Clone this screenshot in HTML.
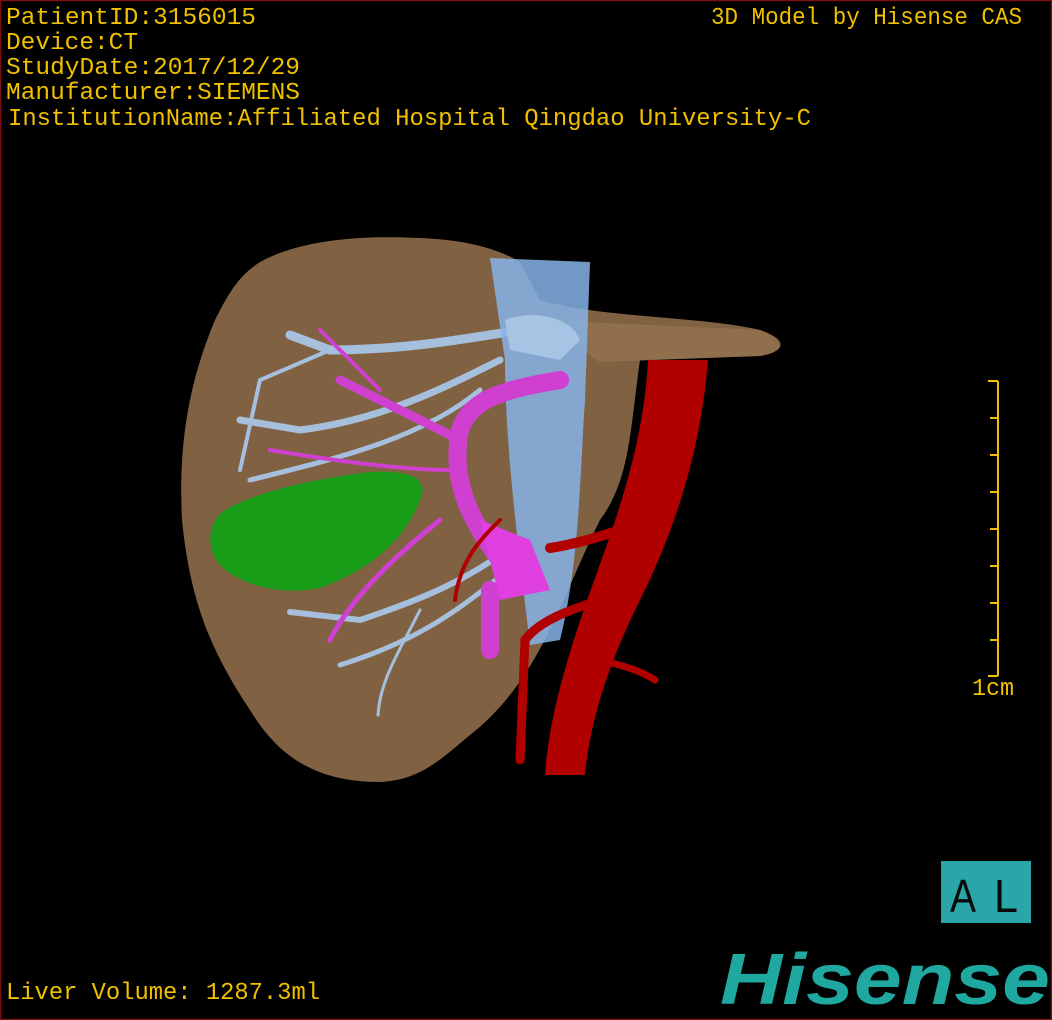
<!DOCTYPE html>
<html><head><meta charset="utf-8"><style>
html,body{margin:0;padding:0;background:#000;width:1052px;height:1020px;overflow:hidden}
svg{display:block}
text{font-family:"Liberation Mono","Noto Sans CJK SC",monospace;fill:#f0c000}
</style></head><body>
<svg width="1052" height="1020" viewBox="0 0 1052 1020" xmlns="http://www.w3.org/2000/svg">
<rect x="0.5" y="0.5" width="1051" height="1019" fill="#000" stroke="#7a1010" stroke-width="1.5"/>
<g font-size="24">
<text x="6" y="24" textLength="250" lengthAdjust="spacingAndGlyphs">PatientID:3156015</text>
<text x="6" y="49" textLength="132" lengthAdjust="spacingAndGlyphs">Device:CT</text>
<text x="6" y="74" textLength="294" lengthAdjust="spacingAndGlyphs">StudyDate:2017/12/29</text>
<text x="6" y="99" textLength="294" lengthAdjust="spacingAndGlyphs">Manufacturer:SIEMENS</text>
<text x="8" y="125" textLength="803" lengthAdjust="spacingAndGlyphs">InstitutionName:Affiliated Hospital Qingdao University-C</text>
<text x="711" y="24" textLength="311" lengthAdjust="spacingAndGlyphs">3D Model by Hisense CAS</text>
<text x="6" y="999" textLength="314" lengthAdjust="spacingAndGlyphs">Liver Volume: 1287.3ml</text>
<text x="972" y="695" textLength="42" lengthAdjust="spacingAndGlyphs">1cm</text>
</g>
<g stroke="#f0c000" stroke-width="2">
<line x1="998" y1="381" x2="998" y2="676"/>
<line x1="988" y1="381" x2="998" y2="381"/><line x1="988" y1="676" x2="998" y2="676"/>
<line x1="990" y1="418" x2="998" y2="418"/><line x1="990" y1="455" x2="998" y2="455"/>
<line x1="990" y1="492" x2="998" y2="492"/><line x1="990" y1="529" x2="998" y2="529"/>
<line x1="990" y1="566" x2="998" y2="566"/><line x1="990" y1="603" x2="998" y2="603"/>
<line x1="990" y1="640" x2="998" y2="640"/>
</g>
<path d="M260 262 C300 240 360 235 420 238 C470 240 500 250 520 262 L540 300 C600 318 700 316 760 330 C790 340 785 352 760 356 L640 360 C630 430 630 480 600 520 C560 600 540 680 470 735 C440 760 420 780 380 782 C320 782 280 760 250 710 C210 650 190 600 182 520 C178 440 190 380 215 320 C230 290 240 275 260 262Z" fill="#806243"/>
<path d="M540 320 L760 330 C785 340 785 352 760 356 L600 362 Z" fill="#94744f" opacity=".8"/>
<path d="M225 510 C260 490 320 478 370 472 C410 470 430 478 420 500 C405 540 370 570 320 588 C280 596 240 585 220 565 C205 548 208 522 225 510Z" fill="#1a9e1a"/>
<g stroke="#a6bfdc" fill="none" stroke-linecap="round">
<path d="M520 330 C460 340 400 350 330 350 L290 335" stroke-width="9"/>
<path d="M500 360 C440 390 380 420 300 430 L240 420" stroke-width="7"/>
<path d="M480 390 C420 440 330 460 250 480" stroke-width="5"/>
<path d="M520 540 C470 580 420 600 360 620 L290 612" stroke-width="6"/>
<path d="M520 560 C460 610 420 640 340 665" stroke-width="5"/>
<path d="M420 610 C400 650 380 680 378 715" stroke-width="3"/>
<path d="M330 350 L260 380 L240 470" stroke-width="4"/>
</g>
<path d="M490 258 L590 262 L585 400 C580 470 580 560 560 640 L530 645 C520 560 505 450 505 360 Z" fill="#86b3e8" opacity=".85"/>
<path d="M505 320 C530 310 570 315 580 340 L560 360 L510 350Z" fill="#a8c4e4"/>
<g stroke="#d040d0" fill="none" stroke-linecap="round">
<path d="M500 560 C470 520 450 480 460 430 C470 400 500 390 560 380" stroke-width="18"/>
<path d="M460 440 C420 420 380 400 340 380" stroke-width="9"/>
<path d="M450 470 C400 470 330 460 270 450" stroke-width="4"/>
<path d="M440 520 C390 560 350 600 330 640" stroke-width="5"/>
<path d="M380 390 L320 330" stroke-width="4"/>
<path d="M490 590 L490 650" stroke-width="18"/>
</g>
<path d="M480 520 L530 540 L550 590 L500 600 Z" fill="#e040e0"/>
<path d="M648 360 L708 360 C700 460 670 540 640 600 C610 660 590 720 585 775 L545 775 C550 700 580 620 605 550 C630 480 645 420 648 360Z" fill="#b00000"/>
<g stroke="#b00000" fill="none" stroke-linecap="round">
<path d="M620 530 C590 540 570 545 550 548" stroke-width="10"/>
<path d="M600 600 C570 610 540 620 525 640 L520 760" stroke-width="9"/>
<path d="M600 660 C620 665 640 670 655 680" stroke-width="7"/>
<path d="M500 520 C480 540 460 560 455 600" stroke-width="4"/>
</g>
<rect x="941" y="861" width="90" height="62" fill="#2aa5a8"/>
<text x="950" y="912" font-size="46" textLength="26" lengthAdjust="spacingAndGlyphs" style="fill:#0a0a0a;font-family:'Liberation Sans',sans-serif">A</text>
<text x="994" y="912" font-size="46" textLength="24" lengthAdjust="spacingAndGlyphs" style="fill:#0a0a0a;font-family:'Liberation Sans',sans-serif">L</text>
<text x="720" y="1004" font-size="72" font-weight="bold" font-style="italic" textLength="330" lengthAdjust="spacingAndGlyphs" style="fill:#1fa8a0;font-family:'Liberation Sans',sans-serif">Hisense</text>
</svg>
</body></html>
